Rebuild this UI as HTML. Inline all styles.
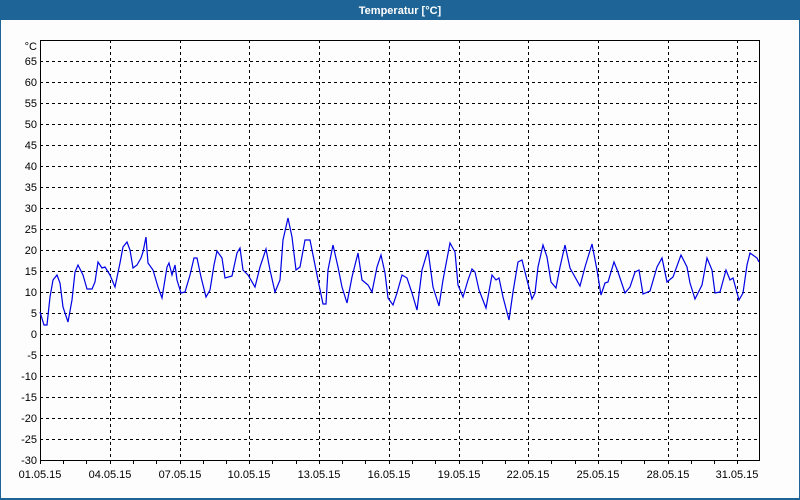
<!DOCTYPE html>
<html><head><meta charset="utf-8"><style>
html,body{margin:0;padding:0;background:#fff}
svg{display:block}
text{font-family:"Liberation Sans","DejaVu Sans",sans-serif;font-size:11px;fill:#000}
</style></head><body>
<svg width="800" height="500" xmlns="http://www.w3.org/2000/svg">
<rect x="0" y="0" width="800" height="500" fill="#1e6496"/>
<rect x="1" y="20" width="798" height="478" fill="#fcfdfc"/>
<text x="400" y="14" text-anchor="middle" style="fill:#fff;font-weight:bold">Temperatur [°C]</text>
<g stroke="#000" stroke-width="1" stroke-dasharray="3,3" fill="none">
<path d="M40 61.5H760M40 82.5H760M40 103.5H760M40 124.5H760M40 145.5H760M40 166.5H760M40 187.5H760M40 208.5H760M40 229.5H760M40 250.5H760M40 271.5H760M40 292.5H760M40 313.5H760M40 334.5H760M40 355.5H760M40 376.5H760M40 397.5H760M40 418.5H760M40 439.5H760"/>
<path d="M110.5 40V460M180.5 40V460M249.5 40V460M319.5 40V460M389.5 40V460M459.5 40V460M528.5 40V460M598.5 40V460M668.5 40V460M737.5 40V460"/>
</g>
<rect x="40.5" y="40.5" width="719" height="420" fill="none" stroke="#000"/>
<g stroke="#000">
<path d="M63.5 460v4M86.5 460v4M110.5 460v4M133.5 460v4M156.5 460v4M180.5 460v4M203.5 460v4M226.5 460v4M249.5 460v4M272.5 460v4M296.5 460v4M319.5 460v4M342.5 460v4M365.5 460v4M389.5 460v4M412.5 460v4M435.5 460v4M459.5 460v4M482.5 460v4M505.5 460v4M528.5 460v4M551.5 460v4M575.5 460v4M598.5 460v4M621.5 460v4M644.5 460v4M668.5 460v4M691.5 460v4M714.5 460v4M737.5 460v4M40.5 460v4"/>
</g>
<g text-anchor="end">
<text x="37" y="50">°C</text>
<text x="37" y="65">65</text><text x="37" y="86">60</text><text x="37" y="107">55</text><text x="37" y="128">50</text><text x="37" y="149">45</text><text x="37" y="170">40</text><text x="37" y="191">35</text><text x="37" y="212">30</text><text x="37" y="233">25</text><text x="37" y="254">20</text><text x="37" y="275">15</text><text x="37" y="296">10</text><text x="37" y="317">5</text><text x="37" y="338">0</text><text x="37" y="359">-5</text><text x="37" y="380">-10</text><text x="37" y="401">-15</text><text x="37" y="422">-20</text><text x="37" y="443">-25</text><text x="37" y="464">-30</text>
</g>
<g text-anchor="middle">
<text x="40" y="478">01.05.15</text><text x="110" y="478">04.05.15</text><text x="180" y="478">07.05.15</text><text x="249" y="478">10.05.15</text><text x="319" y="478">13.05.15</text><text x="389" y="478">16.05.15</text><text x="459" y="478">19.05.15</text><text x="528" y="478">22.05.15</text><text x="598" y="478">25.05.15</text><text x="668" y="478">28.05.15</text><text x="737" y="478">31.05.15</text>
</g>
<polyline fill="none" stroke="#0000e6" stroke-width="1.2" points="40,312 44,325 47,325 50,297 53,280 57,275 60,283 63,307 68,322 72,300 75,272 78,265 83,275 87,289 92,289 95,282 98,262 102,268 105,267 110,275 115,287 120,263 123,247 127,242 130,250 133,268 137,265 141,258 143,252 146,237 148,263 153,270 158,287 162,298 167,267 169,263 172,275 175,265 177,280 181,293 185,292 190,275 194,258 197,258 201,277 206,297 210,290 214,265 217,251 222,258 225,278 232,276 237,253 240,248 243,270 248,275 255,287 260,267 266,249 270,270 275,292 280,280 283,240 288,218 292,237 296,270 300,267 305,240 310,240 313,255 318,280 323,304 326,304 328,270 333,245 338,267 342,287 347,303 352,277 358,253 362,280 368,285 372,292 377,267 381,255 385,273 388,298 393,305 397,293 402,275 407,278 412,293 417,310 422,270 428,250 433,287 439,306 443,280 450,243 455,252 458,285 463,297 468,280 472,269 475,272 479,290 486,308 492,275 496,280 499,278 503,297 509,320 513,292 518,262 522,260 527,280 532,299 535,293 538,267 543,245 547,257 551,282 556,288 560,267 565,245 570,268 580,286 585,267 592,244 597,270 601,295 605,283 608,282 614,262 618,272 625,293 630,287 635,272 639,270 643,294 650,291 657,267 662,258 667,282 673,277 681,255 687,267 690,283 695,299 702,285 707,258 712,270 715,293 720,292 726,270 730,280 733,278 739,300 743,293 747,265 750,253 757,258 759,262"/>
</svg>
</body></html>
